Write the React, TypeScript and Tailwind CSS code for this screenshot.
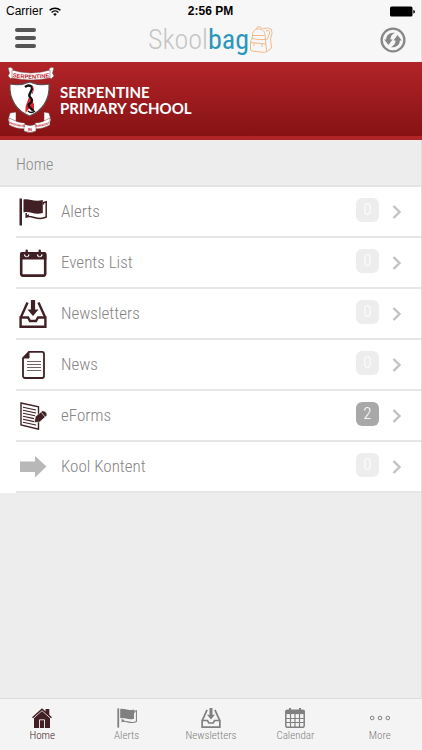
import type { ReactNode } from "react";

type IconProps = { className?: string };

function FlagIcon({ className }: IconProps) {
  return (
    <svg viewBox="0 0 28 28" className={className} fill="currentColor" aria-hidden="true">
      <path d="M0.500 0.500h2.500v27H0.500z" />
      <path d="M4.500 1.500C10 0 15 4.500 23.800 2V15C15 17.500 10 12.500 4.500 14.500z" />
      <path
        d="M24.500 6.500V4.500L27.200 3.800V19C19 23.500 13 16.500 7.200 19V15M7.200 18.300L10 16.800"
        fill="none"
        stroke="currentColor"
        strokeWidth="1.500"
      />
    </svg>
  );
}

function EventIcon({ className }: IconProps) {
  return (
    <svg viewBox="0 0 28 28" className={className} aria-hidden="true">
      <rect x="2.200" y="4.200" width="24" height="22.400" rx="1.800" fill="none" stroke="currentColor" strokeWidth="2.600" />
      <path d="M3 3h22.400a2 2 0 0 1 2 2v5.500H1V5a2 2 0 0 1 2-2z" fill="currentColor" />
      <path d="M5.600 5.500a2.100 2.100 0 1 0 4.200 0M18.600 5.500a2.100 2.100 0 1 0 4.200 0" fill="none" stroke="white" strokeWidth="1.400" />
      <path d="M7.700 1.800v4.400M20.700 1.800v4.400" stroke="currentColor" strokeWidth="2.400" strokeLinecap="round" />
    </svg>
  );
}

function InboxIcon({ className }: IconProps) {
  return (
    <svg viewBox="0 0 28 28" className={className} fill="none" stroke="currentColor" aria-hidden="true">
      <path d="M8.500 2.500L2 17M19.500 2.500L26 17" strokeWidth="2.400" />
      <path d="M1.600 17.500H9L11 21H17L19 17.500H26.400V26.800H1.600z" strokeWidth="2.400" />
      <path d="M14 0V10" strokeWidth="4.200" />
      <path d="M8.500 9.500H19.500L14 16z" fill="currentColor" stroke="none" />
    </svg>
  );
}

function PageIcon({ className }: IconProps) {
  return (
    <svg viewBox="0 0 28 28" className={className} fill="none" stroke="currentColor" aria-hidden="true">
      <path d="M10 0.900H23a2 2 0 0 1 2 2V25a2 2 0 0 1-2 2H6a2 2 0 0 1-2-2V7z" strokeWidth="1.800" />
      <path d="M10 1V7H4z" fill="currentColor" />
      <path d="M8 10.500h14M8 13.500h14M8 16.500h14M8 19.500h14" strokeWidth="1" opacity=".7" />
    </svg>
  );
}

function FormIcon({ className }: IconProps) {
  return (
    <svg viewBox="0 0 28 28" className={className} fill="none" stroke="currentColor" aria-hidden="true">
      <path d="M2 1L19.500 4.800V27.200L2 23z" strokeWidth="1.400" />
      <path
        d="M4 5.200l13 2.800M4 8.200l13 2.800M4 11.200l12 2.600M4 14.200l11 2.400M4 17.200l11 2.400M4 20.200l13 2.800"
        strokeWidth="1.100"
      />
      <path d="M15.200 20.500L16.500 14.500L23.500 8.800Q28.400 9.500 27.800 13.600L20.600 20z" fill="currentColor" stroke="white" strokeWidth=".5" />
      <path d="M22.400 10.500L26 14.900" stroke="white" strokeWidth=".7" />
    </svg>
  );
}

function ArrowIcon({ className }: IconProps) {
  return (
    <svg viewBox="0 0 28 28" className={className} fill="#b8b8b8" aria-hidden="true">
      <path d="M1 8.500H16V3L27.500 13.500L16 24.500V19H1z" />
    </svg>
  );
}

function HouseIcon({ className }: IconProps) {
  return (
    <svg viewBox="0 0 20 20" className={className} fill="currentColor" aria-hidden="true">
      <path d="M2 9L10 2L18 9V20H2z" />
      <path d="M13.500 1H17.300V9H13.500z" />
      <path d="M0.600 11L10 2.600L19.400 11" fill="none" stroke="#f4f4f4" strokeWidth="1" />
      <path d="M0.500 9.700L10 1.200L19.500 9.700" fill="none" stroke="currentColor" strokeWidth="1.500" />
      <path d="M7.500 20V11.800H12.500V20" fill="none" stroke="#f4f4f4" strokeWidth=".9" />
    </svg>
  );
}

function CalendarIcon({ className }: IconProps) {
  return (
    <svg viewBox="0 0 20 20" className={className} fill="none" stroke="currentColor" aria-hidden="true">
      <rect x="0.800" y="2.300" width="18.400" height="17" rx="1.500" strokeWidth="1.500" />
      <path d="M0.500 4.200H19.500" strokeWidth="3.800" />
      <path d="M5 0V3M15 0V3" strokeWidth="2" />
      <path d="M1 10.500h18M1 14.500h18M5.500 6v13M10 6v13M14.500 6v13" strokeWidth="1.200" />
    </svg>
  );
}

function MoreIcon({ className }: IconProps) {
  return (
    <svg viewBox="0 0 20 20" className={className} fill="none" stroke="currentColor" aria-hidden="true">
      <circle cx="2.200" cy="10" r="1.800" />
      <circle cx="10" cy="10" r="1.800" />
      <circle cx="17.800" cy="10" r="1.800" />
    </svg>
  );
}

function WifiIcon() {
  return (
    <svg viewBox="0 0 12 9" className="h-[9px] w-3" fill="none" stroke="black" aria-label="Wi-Fi">
      <path d="M0.600 3.300a7.800 7.800 0 0 1 10.800 0" strokeWidth="1.500" />
      <path d="M2.600 5.400a4.900 4.900 0 0 1 6.800 0" strokeWidth="1.400" />
      <path d="M6 8.900L4.200 7.100a2.600 2.600 0 0 1 3.600 0z" fill="black" stroke="none" />
    </svg>
  );
}

function BatteryIcon() {
  return (
    <svg viewBox="0 0 25 11" className="h-[11px] w-[25px]" aria-label="Battery full">
      <rect x="0" y="0.500" width="22.500" height="10" rx="1.500" fill="black" />
      <path d="M23.300 4a1.700 1.700 0 0 1 0 3.400z" fill="black" />
    </svg>
  );
}

function BackpackIcon() {
  return (
    <svg viewBox="0 0 24 28" className="h-7 w-6" fill="none" stroke="#f0b27e" strokeWidth=".9" aria-hidden="true">
      <path d="M3.500 9C4 4.500 6 3 9.500 3S15.500 4.500 16 9L17.500 24Q17.500 26.500 15.500 26.500L3 25Q1.500 25 1.500 23V16Q2 14 3 13z" />
      <path d="M7 3Q7.500 0.800 10 0.800T13 3M3.500 9.500H15.500M3 12.500Q9 14 16.500 13.500M1.500 16.500L17 18M5 17v3M13 18v3" />
      <path d="M14 2.500Q20 1 22.500 3.500Q24 7 21.500 13L22.500 22L17.500 26M17 5Q21 3.500 20.500 7T17.500 14" />
    </svg>
  );
}

function RefreshIcon() {
  return (
    <svg viewBox="0 0 26 26" className="size-[26px]" fill="#878787" stroke="#878787" aria-hidden="true">
      <circle cx="13" cy="13" r="11.400" fill="none" strokeWidth="2.300" />
      <path d="M15 5.800C9.500 5 6 8.500 6.200 12.500H4.200L8.500 18L12.500 12.500H10.400C10.400 9.500 12 7.500 15 5.800z" stroke="none" />
      <path d="M11 20.200C16.500 21 20 17.500 19.800 13.500H21.800L17.500 8L13.500 13.500H15.600C15.600 16.500 14 18.500 11 20.200z" stroke="none" />
    </svg>
  );
}

function SchoolCrest() {
  return (
    <svg viewBox="0 0 48 66" className="h-[66px] w-12" role="img" aria-label="School crest">
      <g fill="white" stroke="#6b3a3a" strokeWidth=".5">
        <path d="M1 1Q4 -1 6 2V10L4 12L1 9L2.500 6zM47 1Q44 -1 42 2V10L44 12L47 9L45.500 6z" />
        <path d="M5 3Q24 9 43 3V11Q24 15 5 11z" />
        <path d="M3 46L9 45V54L3 57L1 53zM42 46L37 45V54L42 57L44 53z" />
        <path d="M2 51Q11 56 18 56V62Q9 62 2 58zM43 51Q35 56 28 56V62Q36 62 43 58z" />
        <path d="M17 57Q23 60 29 57V64Q23 67 17 64z" />
      </g>
      <path
        d="M3 17Q14 19 22.500 15Q32 19 42 17C43 33 35 44 22.500 49C10 44 2 33 3 17z"
        fill="white"
        stroke="#5d5050"
        strokeWidth="1.100"
      />
      <defs>
        <path id="crest-name" d="M5 10Q24 13.500 43 10" />
        <path id="crest-left" d="M2 56.500Q10 60 18 60" />
        <path id="crest-right" d="M28 60Q36 60 43 56.500" />
      </defs>
      <g fill="#c3202b" fontFamily="Liberation Sans, sans-serif" fontWeight="700" textAnchor="middle">
        <text fontSize="5.800">
          <textPath href="#crest-name" startOffset="50%">
            SERPENTINE
          </textPath>
        </text>
        <text fontSize="3">
          <textPath href="#crest-left" startOffset="50%">
            PROGRESS
          </textPath>
        </text>
        <text fontSize="3">
          <textPath href="#crest-right" startOffset="50%">
            HARMONY
          </textPath>
        </text>
        <text x="23" y="63.500" fontSize="4">
          IN
        </text>
      </g>
      <path d="M22 30L18.500 40L18.500 46L22.500 41L27 45V37z" fill="#e3202e" />
      <path
        d="M18 20Q22 17 25 20C26 25 20 27 23 30C27 34 24 36 22 37C20 40 25 41 26 44"
        fill="none"
        stroke="#111"
        strokeWidth="2.400"
      />
      <path d="M21 44Q24 47 28 44" fill="none" stroke="#111" strokeWidth="1.500" />
      <path d="M25 18.500Q28 22 25 27" fill="none" stroke="#e3202e" strokeWidth=".9" />
    </svg>
  );
}

const menu: { label: string; count: number; icon: ReactNode }[] = [
  { label: "Alerts", count: 0, icon: <FlagIcon className="size-7" /> },
  { label: "Events List", count: 0, icon: <EventIcon className="size-7" /> },
  { label: "Newsletters", count: 0, icon: <InboxIcon className="size-7" /> },
  { label: "News", count: 0, icon: <PageIcon className="size-7" /> },
  { label: "eForms", count: 2, icon: <FormIcon className="size-7" /> },
  { label: "Kool Kontent", count: 0, icon: <ArrowIcon className="size-7" /> },
];

const tabs: { label: string; icon: ReactNode }[] = [
  { label: "Home", icon: <HouseIcon className="size-5" /> },
  { label: "Alerts", icon: <FlagIcon className="size-5" /> },
  { label: "Newsletters", icon: <InboxIcon className="size-5" /> },
  { label: "Calendar", icon: <CalendarIcon className="size-5" /> },
  { label: "More", icon: <MoreIcon className="size-5" /> },
];

export default function App() {
  return (
    <div className="flex min-h-screen flex-col bg-[#ededed] font-['Roboto_Condensed','Liberation_Sans_Narrow',sans-serif] font-light">
      <header className="border-r border-[#dedede] bg-[#f7f7f7]">
        <div className="grid h-[22px] grid-cols-3 items-center px-[6px] font-['Liberation_Sans',sans-serif] text-xs font-normal text-black">
          <div className="flex items-center gap-[6px]">
            Carrier <WifiIcon />
          </div>
          <div className="text-center font-bold">2:56 PM</div>
          <div className="flex justify-end">
            <BatteryIcon />
          </div>
        </div>
        <div className="grid h-10 grid-cols-[1fr_auto_1fr] items-center px-[15px] pb-1">
          <button aria-label="Menu" className="mb-1 flex w-[21px] flex-col gap-1">
            <span className="h-1 rounded-full bg-[#555]" />
            <span className="h-1 rounded-full bg-[#555]" />
            <span className="h-1 rounded-full bg-[#555]" />
          </button>
          <div className="flex items-center text-[28px] leading-8 text-[#c5c5c5]">
            <span>Skool</span>
            <span className="font-normal text-[#2b96bc]">bag</span>
            <BackpackIcon />
          </div>
          <button aria-label="Refresh" className="justify-self-end">
            <RefreshIcon />
          </button>
        </div>
      </header>

      <div className="flex h-[78px] items-center gap-[5px] border-t border-b-4 border-[#b02326] bg-linear-to-b from-[#b12428] to-[#871214] pl-[7px]">
        <SchoolCrest />
        <h1 className="font-['Lato',sans-serif] text-[15px] leading-4 font-bold text-white">
          SERPENTINE
          <br />
          PRIMARY SCHOOL
        </h1>
      </div>

      <main className="flex-1 border-r border-[#dedede]">
        <h2 className="flex h-[47px] items-center border-b-2 border-[#e4e4e4] px-4 pt-1 text-base text-[#8b8b8b]">Home</h2>
        <ul className="bg-white pl-4">
          {menu.map((item) => (
            <li key={item.label} className="border-b-2 border-[#e6e6e6]">
              <a href="#" className="flex h-[49px] items-center pr-[19px] pl-[3px] text-[17px] text-[#858585]">
                <span className="text-[#402024]">{item.icon}</span>
                <span className="flex-1 pl-[14px]">{item.label}</span>
                <span
                  className={`mb-[3px] flex h-6 w-[23px] items-center justify-center rounded-md text-white ${
                    item.count > 0 ? "bg-[#a8a8a8]" : "bg-[#ededed]"
                  }`}
                >
                  {item.count}
                </span>
                <svg viewBox="0 0 10 14" className="ml-[13px] h-[14px] w-[10px]" fill="none" stroke="#c2c2c2" strokeWidth="2.400" aria-hidden="true">
                  <path d="M1.500 1L7.500 7L1.500 13" />
                </svg>
              </a>
            </li>
          ))}
        </ul>
      </main>

      <nav className="grid h-[52px] grid-cols-5 border-t border-[#dcdcdc] bg-[#f4f4f4]">
        {tabs.map((tab) => (
          <a
            key={tab.label}
            href="#"
            className={`flex flex-col items-center pt-[9px] text-[11px] leading-4 ${
              tab.label === "Home" ? "text-[#402024]" : "text-[#808080]"
            }`}
          >
            {tab.icon}
            {tab.label}
          </a>
        ))}
      </nav>
    </div>
  );
}
